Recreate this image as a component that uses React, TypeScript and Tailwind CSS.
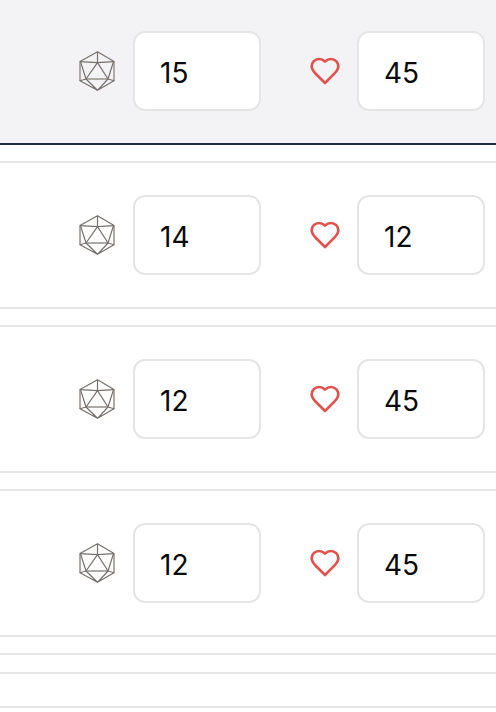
import type { ReactNode } from "react";

type Combatant = { id: number; initiative: number; health: number; active?: boolean };

const combatants: Combatant[] = [
  { id: 1, initiative: 15, health: 45, active: true },
  { id: 2, initiative: 14, health: 12 },
  { id: 3, initiative: 12, health: 45 },
  { id: 4, initiative: 12, health: 45 },
];

function DiceIcon() {
  return (
    <svg
      viewBox="0 0 40 40"
      className="h-10 w-10 shrink-0 text-[#75706c]"
      fill="none"
      stroke="currentColor"
      strokeWidth="1.2"
      strokeLinejoin="round"
      aria-hidden="true"
    >
      <path d="M3 10.8V30M37 10.8V30M9 28H31" stroke="#b0aaa6" strokeWidth="2" />
      <path d="M20.5 0.8 37 10.6 20.5 11.6 3 10.6Z" />
      <path d="M20.5 0.8V11.6L9 28 3.5 10.6M20.5 11.6 31 28 36.5 10.6" />
      <path d="M3 29.8 9 28 20.5 39.3ZM37 29.8 31 28 20.5 39.3Z" />
    </svg>
  );
}

function HeartIcon() {
  return (
    <svg
      viewBox="0 0 24 24"
      className="h-8 w-8 shrink-0 text-[#e0524d]"
      fill="none"
      stroke="currentColor"
      strokeWidth="2"
      strokeLinecap="round"
      strokeLinejoin="round"
      aria-hidden="true"
    >
      <path d="M19 14c1.49-1.46 3-3.21 3-5.5A5.5 5.5 0 0 0 16.5 3c-1.76 0-3 .5-4.5 2-1.5-1.5-2.74-2-4.5-2A5.5 5.5 0 0 0 2 8.5c0 2.3 1.5 4.05 3 5.5l7 7Z" />
    </svg>
  );
}

function Stat({ icon, label, value }: { icon: ReactNode; label: string; value: number }) {
  return (
    <label className="flex items-center gap-4">
      {icon}
      <input
        type="text"
        inputMode="numeric"
        aria-label={label}
        defaultValue={value}
        className="h-20 w-32 rounded-xl border-2 border-[#e5e5e5] bg-white px-[25px] pt-[3px] text-[28px] leading-10 text-[#0a0a0a] outline-none"
      />
    </label>
  );
}

function Row({ combatant }: { combatant: Combatant }) {
  return (
    <li
      className={
        combatant.active
          ? "flex gap-12 border-b-2 border-[#202b45] bg-[#f3f3f5] pt-[31px] pb-8 pl-[77px]"
          : "flex gap-12 border-y-2 border-[#e5e5e5] bg-white py-8 pl-[77px]"
      }
    >
      <Stat icon={<DiceIcon />} label="Initiative" value={combatant.initiative} />
      <Stat icon={<HeartIcon />} label="Health" value={combatant.health} />
    </li>
  );
}

export default function App() {
  return (
    <main className="overflow-hidden bg-white font-['Inter',sans-serif]">
      <ul className="flex flex-col gap-4">
        {combatants.map((combatant) => (
          <Row key={combatant.id} combatant={combatant} />
        ))}
      </ul>
      <footer className="mt-4 border-t-2 border-[#e5e5e5] pt-[17px]">
        <div className="h-9 border-y-2 border-[#e5e5e5]" />
      </footer>
    </main>
  );
}
